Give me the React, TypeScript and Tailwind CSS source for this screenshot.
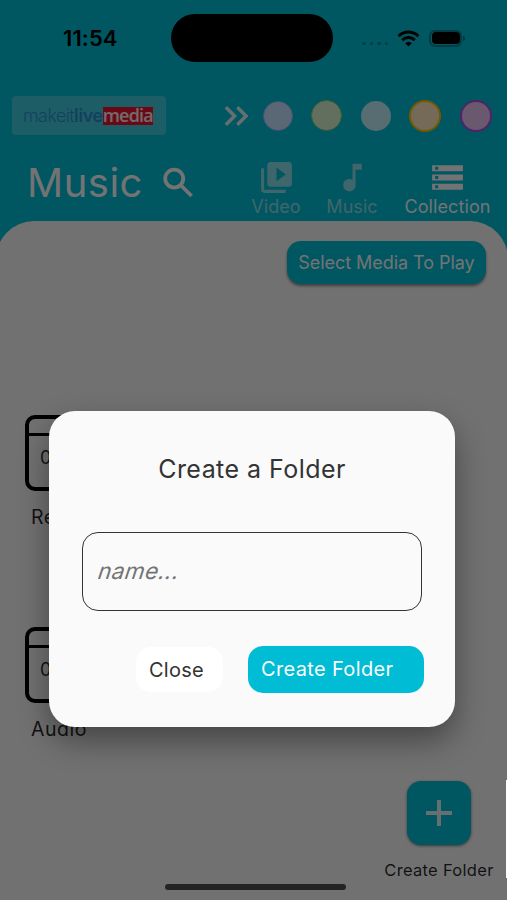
import { MdMusicNote, MdStorage, MdVideoLibrary } from 'react-icons/md'

function StatusBar() {
    return (
        <div className="flex h-[62px] pt-[14px]">
            <div className="w-[171px] pl-[63px] text-[22px] leading-[49px] font-semibold tracking-[0.1px] text-black">11:54</div>
            <div className="h-12 w-[162px] rounded-full bg-black"></div>
            <div className="ml-[29px] flex h-12 items-center">
                <div className="mt-[11px] flex w-[26px] gap-[4px]">
                    <span className="size-[3.5px] rounded-full bg-black/25"></span>
                    <span className="size-[3.5px] rounded-full bg-black/25"></span>
                    <span className="size-[3.5px] rounded-full bg-black/25"></span>
                    <span className="size-[3.5px] rounded-full bg-black/25"></span>
                </div>
                <svg className="ml-[9px] h-[17px] w-[23px]" viewBox="0 0 23 17" fill="none" stroke="black" strokeWidth="3">
                    <path d="M1.6 6.2a14 14 0 0 1 19.8 0" />
                    <path d="M5.2 10.1a9 9 0 0 1 12.6 0" />
                    <path d="M11.5 16.6 8.2 13.2a4.8 4.8 0 0 1 6.6 0z" fill="black" stroke="none" />
                </svg>
                <div className="ml-[9px] flex h-[17px] w-[33px] items-center justify-center rounded-[6px] border-2 border-black/30">
                    <div className="h-[12px] w-[28px] shrink-0 rounded-[4px] bg-black"></div>
                </div>
                <div className="ml-[1px] h-[5px] w-[2px] rounded-r-full bg-black/40"></div>
            </div>
        </div>
    )
}

function Folder({ name }: { name: string }) {
    return (
        <div className="h-[212px] w-[110px]">
            <div className="h-[76px] w-[76px] rounded-[10px] border-4 border-black">
                <div className="h-[17px] border-b-[3.5px] border-black"></div>
                <div className="pt-[10px] pl-[11px] text-[18px] leading-6 text-black/85">0</div>
            </div>
            <div className="mt-[12px] pl-[6px] text-[19.5px] leading-7 tracking-[0.5px] text-black/85">{name}</div>
        </div>
    )
}

export default function App() {
    return (
        <div className="relative h-[900px] w-[507px] overflow-hidden bg-[#00bcd4] font-['Inter',sans-serif]">
            <StatusBar />
            <div className="mt-[34px] flex h-[39px] items-center">
                <div className="ml-3 flex h-[39px] w-[154px] items-center rounded-[4px] bg-white/25 pl-[11px]">
                    <span className="text-[18px] leading-5 font-light tracking-[-0.6px] text-[#2c8ccc]">makeit</span>
                    <span className="text-[18px] leading-5 font-semibold tracking-[-0.4px] text-[#2c8ccc]">live</span>
                    <span className="mt-[1px] flex h-[18px] w-[50px] items-center justify-center bg-[#e8152f] font-['Open_Sans'] text-[18px] leading-4 font-semibold tracking-[-0.8px] text-white/90">
                        <span className="-mt-[2px]">media</span>
                    </span>
                </div>
                <svg className="ml-[58px] h-5 w-[25px]" viewBox="0 0 25 20" fill="none" stroke="#fafafa" strokeOpacity="0.9" strokeWidth="3.4">
                    <path d="m1.8 1.2 8.8 8.8-8.8 8.8" />
                    <path d="m13.3 1.2 8.8 8.8-8.8 8.8" />
                </svg>
                <div className="ml-[14px] flex items-center gap-[18.4px]">
                    <div className="size-[30px] rounded-full border border-[#8cb4f5] bg-[#c5e3ff]"></div>
                    <div className="size-[31px] rounded-full border-[1.5px] border-[#78cf70] bg-[#d7f2ce]"></div>
                    <div className="size-[30px] rounded-full bg-[#bdeef7]"></div>
                    <div className="size-[32px] rounded-full border-2 border-[#ffc000] bg-[#ffe8be]"></div>
                    <div className="size-[32px] rounded-full border-2 border-[#b54bde] bg-[#e6c2f0]"></div>
                </div>
            </div>
            <div className="flex h-[86px] pt-[23px]">
                <div className="w-[133px] pl-[27px] text-[40px] leading-[50px] tracking-[0.5px] text-[#fafafa]">Music</div>
                <svg className="mt-[9px] ml-[29px] size-[32px]" viewBox="0 0 32 32" fill="none" stroke="#fafafa" strokeWidth="3.8">
                    <circle cx="12.2" cy="11.6" r="9" />
                    <path d="M18.6 18 29.6 29" />
                </svg>
                <div className="ml-auto flex pr-[16px] text-[18px] leading-[22px] text-[#fafafa]">
                    <div className="flex w-[48px] flex-col items-center opacity-55">
                        <MdVideoLibrary className="mt-[1px] size-[37px]" />
                        <div className="tracking-[0.05px]">Video</div>
                    </div>
                    <div className="ml-[27px] flex w-[50px] flex-col items-center opacity-55">
                        <MdMusicNote className="mt-[1px] size-[37px]" />
                        <div className="tracking-[0.05px]">Music</div>
                    </div>
                    <div className="ml-[27px] flex w-[87px] flex-col items-center">
                        <MdStorage className="mt-[1px] size-[37px]" />
                        <div className="tracking-[0.1px]">Collection</div>
                    </div>
                </div>
            </div>
            <div className="-mr-[1px] -ml-[4px] flex h-[679px] flex-col rounded-t-[38px] bg-[#f6f6f6] pt-[20px] pr-[1px] pl-[4px]">
                <div className="mr-[21px] flex h-[43px] w-[199px] items-center justify-center self-end rounded-[14px] bg-[#00bcd4] text-[18px] tracking-[-0.05px] text-[#fafafa] shadow-[0_2px_3px_rgba(0,0,0,0.45)]">Select Media To Play</div>
                <div className="mt-[131px] ml-[25px] h-[366px]">
                    <Folder name="Recorded" />
                    <Folder name="Audio" />
                </div>
                <div className="mr-[13px] flex w-[110px] flex-col items-center self-end">
                    <div className="flex size-[64px] items-center justify-center rounded-[14px] bg-[#00bcd4] shadow-[0_1px_3px_rgba(0,0,0,0.5)]">
                        <svg className="size-[26px]" viewBox="0 0 26 26" stroke="#fafafa" strokeOpacity="0.9" strokeWidth="4">
                            <path d="M13 0v26M0 13h26" />
                        </svg>
                    </div>
                    <div className="mt-[14px] text-[16.5px] leading-[22px] tracking-[0.3px] whitespace-nowrap text-black/85">Create Folder</div>
                </div>
            </div>

            <div className="absolute inset-0 bg-black/54"></div>
            <div className="absolute top-[884px] left-[165px] h-[6px] w-[181px] rounded-full bg-[#242424]"></div>
            <div className="absolute top-[780px] right-0 h-[98px] w-[1.5px] bg-white"></div>

            <div className="absolute top-[411px] left-[49px] flex h-[316px] w-[406px] flex-col rounded-[26px] bg-[#fafafa] px-[33px] shadow-[0_14px_30px_rgba(0,0,0,0.38)]">
                <div className="mt-[42px] text-center text-[25px] leading-8 tracking-[0.45px] text-[#333]">Create a Folder</div>
                <div className="mt-[47px] flex h-[79px] w-[340px] items-center rounded-[16px] border-[1.5px] border-[#333] px-[16px] pb-[1px]">
                    <span className="-skew-x-[18deg] text-[22.5px] tracking-[0.4px] text-[#747474]">name...</span>
                </div>
                <div className="mt-[35px] flex items-start">
                    <button className="mt-[1px] ml-[54px] h-[45px] w-[87px] shrink-0 rounded-[15px] bg-white pr-[6px] text-[20px] tracking-[0.3px] text-[#333]">Close</button>
                    <button className="ml-[25px] h-[47px] w-[176px] shrink-0 rounded-[15px] bg-[#00bcd4] pb-[1px] pl-[13px] text-left text-[20px] tracking-[0.35px] text-[#fafafa]">Create Folder</button>
                </div>
            </div>
        </div>
    )
}
